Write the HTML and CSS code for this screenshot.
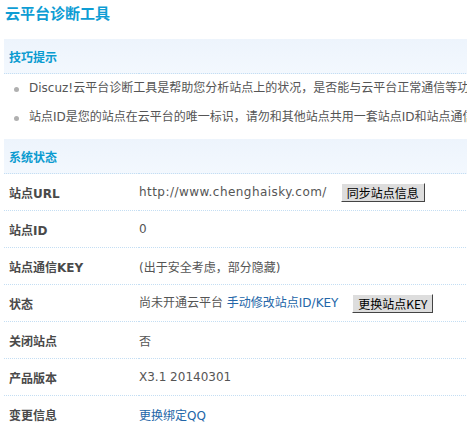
FILE: index.html
```html
<!DOCTYPE html>
<html lang="zh-CN">
<head>
    <meta charset="UTF-8">
    <title>云平台诊断工具</title>
    <link rel="stylesheet" href="styles.css">
</head>
<body>
    <h3 class="page-title">云平台诊断工具</h3>

    <table class="tb">
        <tr><th class="partition" colspan="2">技巧提示</th></tr>
        <tr>
            <td class="tipsblock" colspan="2">
                <ul>
                    <li>Discuz!云平台诊断工具是帮助您分析站点上的状况，是否能与云平台正常通信等功能，同时可以修改站点相关的设置</li>
                    <li>站点ID是您的站点在云平台的唯一标识，请勿和其他站点共用一套站点ID和站点通信KEY</li>
                </ul>
            </td>
        </tr>
        <tr><th class="partition" colspan="2">系统状态</th></tr>
        <tr class="row">
            <td class="label">站点URL</td>
            <td class="value"><span class="url">http://www.chenghaisky.com/</span> <button type="button" class="btn">同步站点信息</button></td>
        </tr>
        <tr class="row">
            <td class="label">站点ID</td>
            <td class="value">0</td>
        </tr>
        <tr class="row">
            <td class="label">站点通信KEY</td>
            <td class="value">(出于安全考虑，部分隐藏)</td>
        </tr>
        <tr class="row">
            <td class="label">状态</td>
            <td class="value">尚未开通云平台 <a href="#">手动修改站点ID/KEY</a> <button type="button" class="btn">更换站点KEY</button></td>
        </tr>
        <tr class="row">
            <td class="label">关闭站点</td>
            <td class="value">否</td>
        </tr>
        <tr class="row">
            <td class="label">产品版本</td>
            <td class="value">X3.1 20140301</td>
        </tr>
        <tr class="row last">
            <td class="label">变更信息</td>
            <td class="value"><a href="#">更换绑定QQ</a></td>
        </tr>
    </table>
</body>
</html>
```

FILE: styles.css
```css
body {
    margin: 0;
    padding: 0 0 0 4px;
    font: 12px "DejaVu Sans", "Noto Sans CJK SC", sans-serif;
    color: #555;
    background: #fff;
    white-space: nowrap;
    overflow: hidden;
}

a {
    color: #2366a8;
    text-decoration: none;
}

.page-title {
    margin: 0 0 18px 1px;
    padding-top: 4px;
    height: 17px;
    line-height: 17px;
    font-size: 15px;
    font-weight: bold;
    color: #0e9dd4;
    font-family: "Noto Sans CJK SC", sans-serif;
}

.tb {
    border-collapse: collapse;
    width: 1000px;
}

.tb td, .tb th {
    padding: 0;
}

.partition {
    height: 34px;
    padding-left: 5px !important;
    text-align: left;
    font-size: 12px;
    font-weight: bold;
    color: #0a9bd0;
    background: linear-gradient(to bottom, #edf4fc, #f3f8fe);
    border-bottom: 1px dotted #c4def3;
    font-family: "Noto Sans CJK SC", sans-serif;
}

.tipsblock {
    padding-bottom: 7px !important;
}

.tipsblock ul {
    margin: 0;
    padding: 0;
    list-style: none;
}

.tipsblock li {
    position: relative;
    height: 29px;
    line-height: 29px;
    padding-left: 25px;
    color: #555;
}

.tipsblock li:before {
    content: "";
    position: absolute;
    left: 10px;
    top: 13px;
    width: 5px;
    height: 5px;
    border-radius: 50%;
    background: #b0b0b0;
}

.row td {
    height: 36px;
    border-bottom: 1px dotted #c4def3;
    vertical-align: middle;
}

.row.last td {
    border-bottom: none;
}

.label {
    width: 130px;
    padding-left: 5px !important;
    font-weight: bold;
    color: #4a4a4a;
}

.value {
    color: #555;
}

.url {
    letter-spacing: 0.45px;
}

.btn {
    margin-left: 10px;
    height: 19px;
    padding: 0 5px;
    font: 12px "Noto Sans CJK SC", sans-serif;
    line-height: 15px;
    color: #000;
    background: #ddd;
    border: 1px solid;
    border-color: #fff #444 #444 #fff;
    vertical-align: middle;
}
```
